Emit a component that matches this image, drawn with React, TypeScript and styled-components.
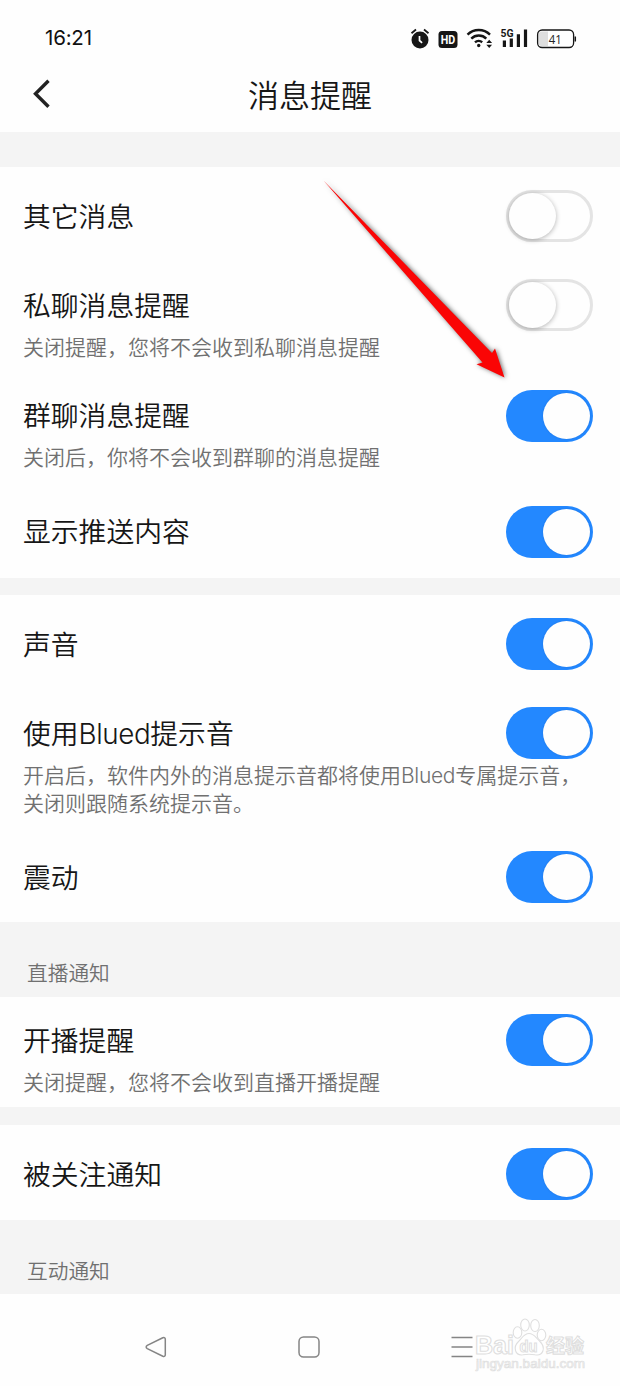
import React from "react";
import styled, { createGlobalStyle } from "styled-components";

const GlobalStyle = createGlobalStyle`
  * { box-sizing: border-box; }
  body {
    margin: 0;
    background: #fefefe;
    color: #161616;
    font-family: "Noto Sans CJK SC", "Noto Sans", sans-serif;
    font-weight: 350;
  }
`;

const Screen = styled.div`
  position: relative;
  display: flex;
  flex-direction: column;
  width: 620px;
  height: 1386px;
  overflow: hidden;
  background: #fefefe;
`;

const StatusBar = styled.div`
  display: flex;
  align-items: center;
  justify-content: space-between;
  height: 60px;
  padding: 15px 42px 0 45px;
`;

const Clock = styled.span`
  font-family: Inter, sans-serif;
  font-size: 20.5px;
  font-weight: 400;
  line-height: 26px;
  letter-spacing: -0.2px;
  color: #111;
`;

const StatusIcons = styled.svg`
  display: block;
  width: 170px;
  height: 30px;
`;

const Header = styled.header`
  display: grid;
  grid-template-columns: 60px 1fr 60px;
  align-items: center;
  height: 72px;
`;

const BackButton = styled.button`
  display: flex;
  align-items: center;
  height: 40px;
  padding: 0 0 0 31px;
  margin-bottom: 4px;
  border: 0;
  background: none;
`;

const PageTitle = styled.h1`
  margin: 0 0 4px;
  font-size: 31px;
  font-weight: 350;
  line-height: 44px;
  text-align: center;
`;

const Divider = styled.div<{ $height: number }>`
  flex: none;
  height: ${(p) => p.$height}px;
  background: #f4f4f4;
`;

const SectionLabel = styled.h2<{ $height: number }>`
  flex: none;
  height: ${(p) => p.$height}px;
  margin: 0;
  padding: 35px 27px 0;
  background: #f4f4f4;
  color: #707070;
  font-size: 20.7px;
  font-weight: 350;
  line-height: 30px;
`;

const Group = styled.section<{ $height: number }>`
  flex: none;
  height: ${(p) => p.$height}px;
`;

const Row = styled.div<{ $detailed: boolean }>`
  padding: ${(p) => (p.$detailed ? "17.4px 27px 1.2px 23px" : "23px 27px 20px 23px")};
`;

const RowMain = styled.div`
  display: flex;
  align-items: center;
  justify-content: space-between;
  height: 52px;
`;

const RowTitle = styled.span`
  padding-bottom: 2.6px;
  font-size: 27.8px;
  line-height: 40px;
`;

const RowDetail = styled.p`
  margin: 0;
  padding: 1.6px 0 10.4px;
  color: #707070;
  font-size: 21px;
  line-height: 27.8px;
  white-space: pre;
`;

const Latin = styled.span`
  font-family: Inter, sans-serif;
  letter-spacing: -0.015em;
  line-height: 1;
`;

const Switch = styled.button<{ $on: boolean }>`
  display: flex;
  justify-content: ${(p) => (p.$on ? "flex-end" : "flex-start")};
  width: 87px;
  height: 52px;
  padding: ${(p) => (p.$on ? "3px" : "0")};
  border: ${(p) => (p.$on ? "0" : "3px solid #e4e4e4")};
  border-radius: 26px;
  background: ${(p) => (p.$on ? "#2388ff" : "#fefefe")};
`;

const Knob = styled.span<{ $on: boolean }>`
  width: 47px;
  height: 46px;
  border-radius: 50%;
  background: #fefefe;
  box-shadow: ${(p) => (p.$on ? "0 0 2px rgba(0, 60, 140, 0.25)" : "0 1px 5px rgba(0, 0, 0, 0.3)")};
`;

const NavBar = styled.nav`
  display: flex;
  align-items: center;
  justify-content: space-between;
  height: 92px;
  padding: 14px 146px 0 144px;
`;

const NavIcon = styled.svg`
  width: 24px;
  height: 24px;
  fill: none;
  stroke: #858585;
  stroke-width: 1.5;
`;

const PointerArrow = styled.svg`
  position: absolute;
  left: 310px;
  top: 170px;
  width: 220px;
  height: 230px;
  filter: drop-shadow(1px 0 2.5px rgba(0, 0, 0, 0.6));
  pointer-events: none;
`;

const Watermark = styled.svg`
  position: absolute;
  left: 470px;
  top: 1314px;
  width: 125px;
  height: 62px;
  fill: #fff;
  stroke: #dfdfdf;
  stroke-width: 1.1;
  pointer-events: none;
`;

type Setting = { title: string; detail?: string; on: boolean };

function MixedText({ text }: { text: string }) {
  return (
    <>
      {text.split(/([A-Za-z]+)/).map((part, i) => (i % 2 ? <Latin key={i}>{part}</Latin> : part))}
    </>
  );
}

function SettingRow({ title, detail, on }: Setting) {
  return (
    <Row $detailed={!!detail}>
      <RowMain>
        <RowTitle>
          <MixedText text={title} />
        </RowTitle>
        <Switch $on={on} role="switch" aria-checked={on} aria-label={title}>
          <Knob $on={on} />
        </Switch>
      </RowMain>
      {detail && (
        <RowDetail>
          <MixedText text={detail} />
        </RowDetail>
      )}
    </Row>
  );
}

function SettingGroup({ height, items }: { height: number; items: Setting[] }) {
  return (
    <Group $height={height}>
      {items.map((item) => (
        <SettingRow key={item.title} {...item} />
      ))}
    </Group>
  );
}

const messageSettings: Setting[] = [
  { title: "其它消息", on: false },
  { title: "私聊消息提醒", detail: "关闭提醒，您将不会收到私聊消息提醒", on: false },
  { title: "群聊消息提醒", detail: "关闭后，你将不会收到群聊的消息提醒", on: true },
  { title: "显示推送内容", on: true },
];

const soundSettings: Setting[] = [
  { title: "声音", on: true },
  {
    title: "使用Blued提示音",
    detail: "开启后，软件内外的消息提示音都将使用Blued专属提示音，\n关闭则跟随系统提示音。",
    on: true,
  },
  { title: "震动", on: true },
];

function StatusGlyphs() {
  return (
    <StatusIcons viewBox="408 22 170 30" fill="none" stroke="#161616">
      <circle cx="420" cy="39" r="8.5" fill="#161616" stroke="none" />
      <path d="M411.5 32.2l4.5-3.7M428.5 32.2l-4.5-3.7" strokeWidth="1.8" />
      <path d="M419.5 35v4.5l2.6 2.3" stroke="#fff" strokeWidth="1.7" />
      <rect x="438.5" y="30" width="19" height="17" rx="3.5" fill="#161616" stroke="none" />
      <text x="448" y="43" textAnchor="middle" fill="#fff" stroke="none" fontFamily="Roboto, sans-serif" fontWeight="700" fontSize="12.5" textLength="14.5" lengthAdjust="spacingAndGlyphs">HD</text>
      <path d="M467.5 33.6a16 16 0 0 1 22.5 0M471.3 37.6a10.6 10.6 0 0 1 15 0M475 41.4a5.5 5.5 0 0 1 7.2-.2" strokeWidth="2.4" />
      <circle cx="478.7" cy="44.5" r="1.7" fill="#161616" stroke="none" />
      <path d="M486.3 42l2.9-3.2 2.9 3.2zM486.3 43.8h5.8l-2.9 3.2z" fill="#161616" stroke="none" />
      <text x="500.5" y="35.8" fill="#161616" stroke="none" fontFamily="Roboto, sans-serif" fontWeight="700" fontSize="11" textLength="13" lengthAdjust="spacingAndGlyphs">5G</text>
      <path d="M504.4 39.5v6.5M511.3 37.5v8.5M518.4 33.2v12.8M525.5 28.5v17.5" strokeWidth="3.2" />
      <path d="M542 30.5h6v14.5h-6a3.5 3.5 0 0 1-3.5-3.5v-7.5a3.5 3.5 0 0 1 3.5-3.5z" fill="#dedede" stroke="none" />
      <rect x="537.6" y="29" width="36" height="17.5" rx="4.5" strokeWidth="1.3" />
      <path d="M575.3 35.5v5" strokeWidth="1.5" />
      <text x="555.3" y="42.6" textAnchor="middle" fill="#222" stroke="none" fontFamily="Open Sans, sans-serif" fontWeight="400" fontSize="13" textLength="13" lengthAdjust="spacingAndGlyphs">41</text>
    </StatusIcons>
  );
}

export default function App() {
  return (
    <>
      <GlobalStyle />
      <Screen>
        <StatusBar>
          <Clock>16:21</Clock>
          <StatusGlyphs />
        </StatusBar>
        <Header>
          <BackButton aria-label="返回">
            <svg width="20" height="30" viewBox="0 0 20 30" fill="none" stroke="#222" strokeWidth="3.4">
              <path d="M17.5 1.8L4.5 14.8L17.5 27.8" />
            </svg>
          </BackButton>
          <PageTitle>消息提醒</PageTitle>
        </Header>
        <Divider $height={35} />
        <SettingGroup height={411} items={messageSettings} />
        <Divider $height={17} />
        <SettingGroup height={327} items={soundSettings} />
        <SectionLabel $height={75}>直播通知</SectionLabel>
        <SettingGroup
          height={110}
          items={[{ title: "开播提醒", detail: "关闭提醒，您将不会收到直播开播提醒", on: true }]}
        />
        <Divider $height={18} />
        <SettingGroup height={95} items={[{ title: "被关注通知", on: true }]} />
        <SectionLabel $height={74}>互动通知</SectionLabel>
        <NavBar>
          <NavIcon viewBox="0 0 24 24">
            <path d="M18.8 2.8L3.3 10.3Q1 12 3.3 13.7L18.8 21.2Q21.3 22 21.3 19.7V4.3Q21.3 2 18.8 2.8z" />
          </NavIcon>
          <NavIcon viewBox="0 0 24 24">
            <rect x="2" y="2" width="20" height="20" rx="4.5" />
          </NavIcon>
          <NavIcon viewBox="0 0 24 24">
            <path d="M1.5 2.5h21M1.5 12h21M1.5 21.5h21" />
          </NavIcon>
        </NavBar>
        <PointerArrow viewBox="310 170 220 230">
          <path d="M323.5 180.5L492 353L495 348.5L504.5 377.5L476.5 364.3L482.5 362.5L323.5 180.5z" fill="#fa0505" />
        </PointerArrow>
        <Watermark viewBox="470 1314 125 62">
          <text x="475" y="1354" fontFamily="Liberation Sans, sans-serif" fontWeight="700" fontSize="25" textLength="39" lengthAdjust="spacingAndGlyphs">Bai</text>
          <path d="M529 1333.5c-5 0-6.5 4-10 7.5c-7 6.5-3.5 15 4 13.8c4-.8 8-.8 12 0c8 1.4 11.5-7 4.5-13.8c-4-3.5-5.5-7.5-10.5-7.5z" />
          <ellipse cx="517.5" cy="1332.5" rx="4.3" ry="5.7" />
          <ellipse cx="525" cy="1325" rx="4.3" ry="6" />
          <ellipse cx="535" cy="1325.5" rx="4.3" ry="6" />
          <ellipse cx="541.5" cy="1335" rx="4.3" ry="5.7" />
          <text x="519.5" y="1352" fontFamily="Liberation Sans, sans-serif" fontWeight="700" fontSize="16" textLength="18" lengthAdjust="spacingAndGlyphs">du</text>
          <text x="546" y="1352.5" fontFamily="Noto Sans CJK SC, sans-serif" fontWeight="700" fontSize="19">经验</text>
          <text x="476" y="1368" fontFamily="Liberation Sans, sans-serif" fontWeight="400" fontSize="12.5" strokeWidth="0.7" textLength="109" lengthAdjust="spacingAndGlyphs">jingyan.baidu.com</text>
        </Watermark>
      </Screen>
    </>
  );
}
